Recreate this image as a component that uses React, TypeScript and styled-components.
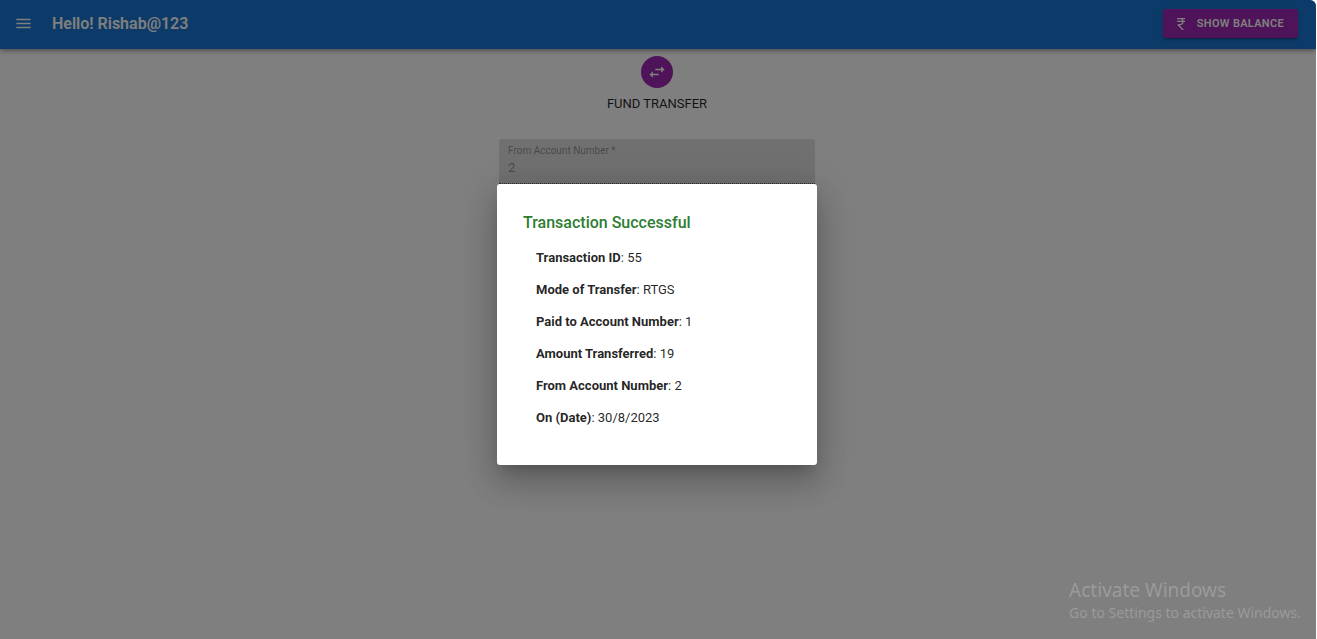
import React from "react";
import styled, { createGlobalStyle } from "styled-components";
import { MdMenu, MdCurrencyRupee, MdSwapHoriz } from "react-icons/md";

const GlobalStyle = createGlobalStyle`
  *, *::before, *::after { box-sizing: border-box; }
  body {
    margin: 0;
    background: #fff;
    color: rgba(0, 0, 0, 0.87);
    font-family: Roboto, "Liberation Sans", sans-serif;
  }
`;

const Page = styled.div`
  position: relative;
  min-height: 100vh;
  margin-right: 1px;
  border-top-right-radius: 6px;
  overflow: hidden;
  background: #fff;
`;

const AppBar = styled.header`
  display: flex;
  align-items: center;
  height: 49px;
  padding: 0 18px 2px 14px;
  background: #1976d2;
  color: #fff;
  box-shadow: 0 2px 3px -1px rgba(0, 0, 0, 0.2), 0 3px 4px rgba(0, 0, 0, 0.14),
    0 1px 8px rgba(0, 0, 0, 0.12);
`;

const MenuButton = styled.button`
  display: flex;
  margin: 0 19px 0 0;
  padding: 0;
  border: 0;
  background: none;
  color: inherit;
  font-size: 19px;
`;

const Greeting = styled.h1`
  flex: 1;
  margin: 0;
  font-size: 16px;
  line-height: 26px;
  font-weight: 600;
`;

const BalanceButton = styled.button`
  display: flex;
  align-items: center;
  gap: 8px;
  height: 29px;
  padding: 0 14px 0 10px;
  border: 0;
  border-radius: 3px;
  background: #9c27b0;
  color: #fff;
  font: 600 11px/20px Roboto, sans-serif;
  letter-spacing: 0.02857em;
  text-transform: uppercase;
  box-shadow: 0 2px 1px -1px rgba(0, 0, 0, 0.2), 0 2px 2px rgba(0, 0, 0, 0.14),
    0 1px 4px rgba(0, 0, 0, 0.12);

  svg { font-size: 16px; }
`;

const Main = styled.main`
  display: flex;
  flex-direction: column;
  align-items: center;
  padding: 7px 2px 0 0;
`;

const Avatar = styled.div`
  display: flex;
  align-items: center;
  justify-content: center;
  width: 32px;
  height: 32px;
  border-radius: 50%;
  background: #9c27b0;
  color: #fff;
  font-size: 20px;
`;

const Title = styled.h2`
  margin: 6px 0 25px;
  font-size: 13px;
  line-height: 20px;
  font-weight: 400;
`;

const Field = styled.div`
  display: flex;
  flex-direction: column;
  width: 316px;
  height: 45px;
  padding: 6px 9px 0;
  border-bottom: 1px dotted rgba(0, 0, 0, 0.6);
  border-radius: 3px 3px 0 0;
  background: rgba(0, 0, 0, 0.12);
`;

const FieldLabel = styled.label`
  font-size: 10px;
  line-height: 12px;
  color: rgba(0, 0, 0, 0.38);
`;

const FieldInput = styled.input`
  width: 100%;
  height: 22px;
  padding: 0;
  border: 0;
  background: none;
  color: rgba(0, 0, 0, 0.38);
  font: 400 13px/22px Roboto, sans-serif;
`;

const Backdrop = styled.div`
  position: absolute;
  inset: 0;
  display: flex;
  align-items: center;
  justify-content: center;
  padding: 10px 2px 0 0;
  background: rgba(0, 0, 0, 0.5);
`;

const Dialog = styled.section`
  width: 320px;
  padding: 26px 26px 31px;
  border-radius: 3px;
  background: #fff;
  box-shadow: 0 9px 12px -6px rgba(0, 0, 0, 0.2),
    0 19px 30px 2px rgba(0, 0, 0, 0.14), 0 7px 37px 6px rgba(0, 0, 0, 0.12);
`;

const DialogTitle = styled.h2`
  margin: 0 0 6px;
  font-size: 16px;
  line-height: 26px;
  font-weight: 500;
  color: #2e7d32;
`;

const Details = styled.dl`
  margin: 0;
  padding: 0 13px;
`;

const Detail = styled.div`
  font-size: 13px;
  line-height: 32px;

  dt, dd { display: inline; margin: 0; }
  dt { font-weight: 700; }
`;

const Watermark = styled.aside`
  position: absolute;
  right: 15px;
  bottom: 16px;
  color: rgba(255, 255, 255, 0.22);
  font-family: "Noto Sans", sans-serif;
`;

const WatermarkTitle = styled.p`
  margin: 0;
  font-size: 19px;
  line-height: 26px;
`;

const WatermarkText = styled.p`
  margin: 0;
  font-size: 14px;
  line-height: 20px;
`;

const details = [
  ["Transaction ID", "55"],
  ["Mode of Transfer", "RTGS"],
  ["Paid to Account Number", "1"],
  ["Amount Transferred", "19"],
  ["From Account Number", "2"],
  ["On (Date)", "30/8/2023"],
];

export default function App() {
  return (
    <Page>
      <GlobalStyle />
      <AppBar>
        <MenuButton aria-label="Open menu"><MdMenu /></MenuButton>
        <Greeting>Hello! Rishab@123</Greeting>
        <BalanceButton><MdCurrencyRupee />Show Balance</BalanceButton>
      </AppBar>
      <Main>
        <Avatar><MdSwapHoriz /></Avatar>
        <Title>FUND TRANSFER</Title>
        <Field>
          <FieldLabel htmlFor="from-account">From Account Number *</FieldLabel>
          <FieldInput id="from-account" defaultValue="2" disabled />
        </Field>
      </Main>
      <Backdrop>
        <Dialog role="dialog" aria-modal="true" aria-labelledby="dialog-title">
          <DialogTitle id="dialog-title">Transaction Successful</DialogTitle>
          <Details>
            {details.map(([name, value]) => (
              <Detail key={name}><dt>{name}</dt>: <dd>{value}</dd></Detail>
            ))}
          </Details>
        </Dialog>
      </Backdrop>
      <Watermark>
        <WatermarkTitle>Activate Windows</WatermarkTitle>
        <WatermarkText>Go to Settings to activate Windows.</WatermarkText>
      </Watermark>
    </Page>
  );
}
